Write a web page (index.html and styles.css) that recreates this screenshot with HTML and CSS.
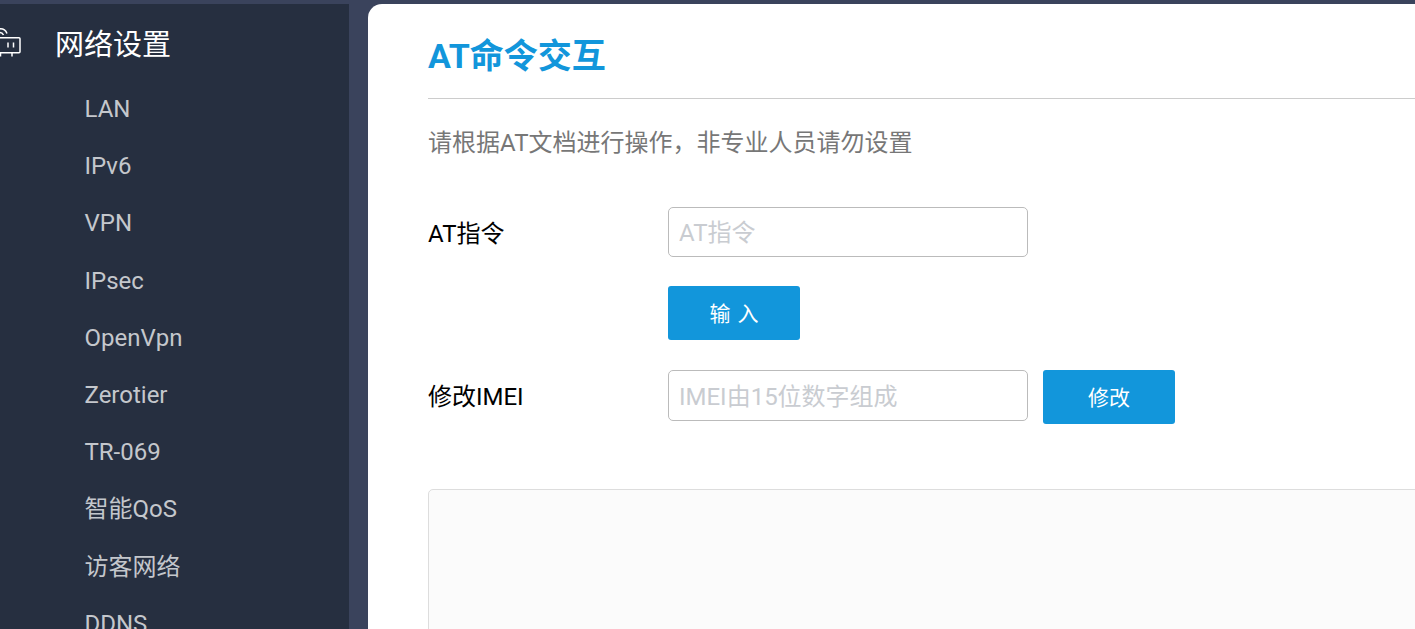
FILE: index.html
```html
<!DOCTYPE html>
<html lang="zh-CN">
<head>
<meta charset="utf-8">
<title>AT命令交互</title>
<link rel="stylesheet" href="styles.css">
</head>
<body>
<div class="app">
  <aside class="sidebar">
    <div class="nav-head">
      <svg class="nav-icon" width="21" height="30" viewBox="0 0 21 30" fill="none" stroke="#fff" stroke-width="1.5">
        <rect x="-6" y="9.75" width="26" height="15" rx="1"/>
        <path d="M8 14.5v5M13.5 14.5v5M0.5 25v3.5M12 25v3.5"/>
        <path d="M-1 1c3.5-.6 6.5 1 8 4.5M-1 4.5c2-.3 3.6.6 4.5 2.5"/>
      </svg>
      <span class="nav-title">网络设置</span>
    </div>
    <ul class="nav-list">
      <li>LAN</li>
      <li>IPv6</li>
      <li>VPN</li>
      <li>IPsec</li>
      <li>OpenVpn</li>
      <li>Zerotier</li>
      <li>TR-069</li>
      <li>智能QoS</li>
      <li>访客网络</li>
      <li>DDNS</li>
    </ul>
  </aside>
  <main class="panel">
    <h1 class="title">AT命令交互</h1>
    <p class="hint">请根据AT文档进行操作，非专业人员请勿设置</p>
    <div class="form-row">
      <label class="label">AT指令</label>
      <input class="field" type="text" placeholder="AT指令">
    </div>
    <div class="btn-row">
      <button class="btn btn-spaced" type="button">输 入</button>
    </div>
    <div class="form-row imei-row">
      <label class="label">修改IMEI</label>
      <input class="field field-tall" type="text" placeholder="IMEI由15位数字组成">
      <button class="btn" type="button">修改</button>
    </div>
    <div class="output"></div>
  </main>
</div>
</body>
</html>
```
FILE: styles.css
```css
* { box-sizing: border-box; }
html, body { margin: 0; height: 100%; overflow: hidden; }
body {
  background: #3a435c;
  font-family: Roboto, "Noto Sans CJK SC", sans-serif;
}
.app {
  display: flex;
  height: 100vh;
  padding-top: 4px;
  gap: 19px;
}
.sidebar {
  flex: 0 0 349px;
  background: #262f40;
  overflow: hidden;
}
.nav-head {
  display: flex;
  align-items: center;
  height: 80px;
  gap: 34px;
}
.nav-icon { flex: none; overflow: visible; margin-top: -2px; }
.nav-title { color: #fff; font-size: 29px; line-height: 40px; margin-top: 2px; }
.nav-list {
  list-style: none;
  margin: 0;
  padding: 0 0 0 84.5px;
  color: #c4c7cc;
  font-size: 24px;
}
.nav-list li { height: 57.2px; line-height: 50px; }
.panel {
  flex: 1;
  min-width: 0;
  background: #fff;
  border-radius: 14px 0 0 0;
  padding: 0 0 0 60px;
  overflow: hidden;
}
.title {
  margin: 0;
  height: 95px;
  padding-top: 29px;
  line-height: 46px;
  color: #1296db;
  font-size: 34px;
  font-weight: 700;
  border-bottom: 1px solid #ccc;
}
.hint {
  margin: 0;
  padding-top: 24px;
  height: 108px;
  line-height: 40px;
  color: #777;
  font-size: 24px;
}
.form-row {
  display: flex;
  align-items: flex-start;
  height: 50px;
}
.label {
  flex: 0 0 240px;
  line-height: 54px;
  color: #000;
  font-size: 24px;
}
.field {
  width: 360px;
  height: 50px;
  padding: 2px 10px 0;
  border: 1px solid #bbb;
  border-radius: 5px;
  background: #fff;
  font: inherit;
  font-size: 24px;
  outline: none;
}
.field-tall { height: 51px; }
.field::placeholder { color: #c9ccd1; opacity: 1; }
.btn-row { padding: 29px 0 30px 240px; }
.btn {
  display: block;
  width: 132px;
  height: 54px;
  border: 0;
  border-radius: 3px;
  background: #1296db;
  color: #fff;
  font-family: inherit;
  font-size: 21px;
  padding: 0 0 2px;
}
.btn-spaced { word-spacing: 2px; }
.imei-row { height: 54px; }
.imei-row .btn { margin-left: 15px; }
.output {
  width: 1200px;
  height: 400px;
  margin-top: 65px;
  background: #fbfbfb;
  border: 1px solid #ddd;
  border-radius: 5px;
}
```
